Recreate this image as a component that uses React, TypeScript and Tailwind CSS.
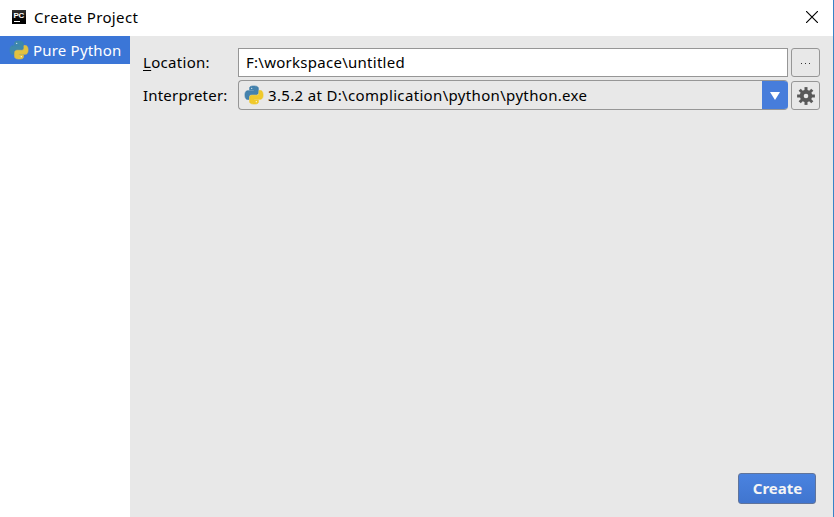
const HALF =
  "M14.25.18l.9.2.73.26.59.3.45.32.34.34.25.34.16.33.1.3.04.26.02.2-.01.13V8.5l-.05.63-.13.55-.21.46-.26.38-.3.31-.33.25-.35.19-.35.14-.33.1-.3.07-.26.04-.21.02H8.77l-.69.05-.59.14-.5.22-.41.27-.33.32-.27.35-.2.36-.15.37-.1.35-.07.32-.04.27-.02.21v3.06H3.17l-.21-.03-.28-.07-.32-.12-.35-.18-.36-.26-.36-.36-.35-.46-.32-.59-.28-.73-.21-.88-.14-1.05-.05-1.23.06-1.22.16-1.04.24-.87.32-.71.36-.57.4-.44.42-.33.42-.24.4-.16.36-.1.32-.05.24-.01h.16l.06.01h8.16v-.83H6.18l-.01-2.75-.02-.37.05-.34.11-.31.17-.28.25-.26.31-.23.38-.2.44-.18.51-.15.58-.12.64-.1.71-.06.77-.04.84-.02 1.27.05z";

interface PythonIconProps {
  blue: string;
  yellow: string;
}

function PythonIcon({ blue, yellow }: PythonIconProps) {
  return (
    <svg viewBox="0 0 24 24" className="h-[18px] w-[18px] shrink-0 overflow-visible">
      <path d={HALF} fill={blue} stroke={blue} strokeWidth="0.9" />
      <circle cx="8.9" cy="3.1" r="0.9" fill="#dbe8f1" />
      <g transform="rotate(180 12 12)">
        <path d={HALF} fill={yellow} stroke={yellow} strokeWidth="0.9" />
        <circle cx="8.9" cy="3.1" r="0.9" fill="#fff8d5" />
      </g>
    </svg>
  );
}

function PyCharmIcon() {
  return (
    <span className="relative -mt-[2px] block h-[14px] w-[14px] shrink-0 bg-gradient-to-b from-[#353535] to-black">
      <span className="absolute top-[2px] left-[1.5px] font-['Liberation_Sans',sans-serif] text-[8px] leading-[8px] font-bold tracking-[-0.3px] text-white">
        PC
      </span>
      <span className="absolute bottom-[2px] left-[2px] h-px w-[6px] bg-white" />
    </span>
  );
}

function GearIcon() {
  return (
    <svg viewBox="-9 -9 18 18" className="h-[18px] w-[18px]">
      <g fill="#595959">
        {[0, 45, 90, 135].map((a) => (
          <rect key={a} x="-1.5" y="-8.9" width="3" height="17.8" transform={`rotate(${a})`} />
        ))}
        <circle r="6.2" />
      </g>
      <circle r="2.3" fill="#e8e8e8" />
    </svg>
  );
}

export default function App() {
  return (
    <div className="flex h-[517px] w-[834px] flex-col overflow-hidden border-r border-[#3784c7] bg-white font-['Noto_Sans',sans-serif] text-[15px] leading-5 text-black">
      <header className="flex h-9 shrink-0 items-center pr-[15px] pl-3">
        <PyCharmIcon />
        <h1 className="ml-2 flex-1 pb-[2px] tracking-[0.38px] whitespace-nowrap">Create Project</h1>
        <svg viewBox="0 0 12 12" className="-mt-[2px] h-3 w-3" stroke="black" strokeWidth="1.15">
          <path d="M0 0L12 12M12 0L0 12" />
        </svg>
      </header>
      <div className="flex flex-1">
        <aside className="w-[130px] shrink-0">
          <div className="flex h-7 items-center bg-[#3b76d7] pl-[10px] text-white">
            <PythonIcon blue="#3f89ab" yellow="#e2c23f" />
            <span className="ml-[5px] tracking-[0.2px] whitespace-nowrap">Pure Python</span>
          </div>
        </aside>
        <main className="flex flex-1 flex-col bg-[#e8e8e8] pt-3 pr-[13px] pl-[13px]">
          <div className="flex h-[29px] items-center">
            <label className="w-[95px] shrink-0 pb-[2px] tracking-[0.3px] whitespace-nowrap">
              <span className="underline underline-offset-2">L</span>ocation:
            </label>
            <div className="flex h-full w-[550px] items-center border border-[#969696] bg-white pl-[7px]">
              <span className="pb-[2px] tracking-[0.27px] whitespace-nowrap">F:\workspace\untitled</span>
            </div>
            <button className="ml-[3px] flex h-full w-[29px] items-center justify-center gap-[3px] rounded-[3px] border border-[#969696] pt-[2px]">
              <i className="h-px w-px bg-[#333]" />
              <i className="h-px w-px bg-[#333]" />
              <i className="h-px w-px bg-[#333]" />
            </button>
          </div>
          <div className="mt-[3px] flex h-[30px] items-center">
            <label className="w-[95px] shrink-0 tracking-[0.2px] whitespace-nowrap">Interpreter:</label>
            <div className="flex h-full w-[550px] items-center overflow-hidden rounded-[4px] border border-r-0 border-[#969696] pl-[6px]">
              <PythonIcon blue="#4482ad" yellow="#f0c92b" />
              <span className="ml-[5px] flex-1 tracking-[0.34px] whitespace-nowrap">3.5.2 at D:\complication\python\python.exe</span>
              <span className="-my-px flex h-[30px] w-[26px] items-center justify-center bg-[#477ddb]">
                <svg viewBox="0 0 10 8" className="mt-[2px] h-2 w-[10px]">
                  <path d="M0 0H10L5 8Z" fill="white" />
                </svg>
              </span>
            </div>
            <button className="ml-[3px] flex h-[29px] w-[29px] items-center justify-center self-end rounded-[3px] border border-[#969696]">
              <GearIcon />
            </button>
          </div>
          <button className="mt-auto mr-[4px] mb-[13px] h-[31px] w-[78px] self-end rounded-[3px] border border-[#60749b] bg-gradient-to-b from-[#4a83e0] to-[#4075cf] pb-[2px] pl-[1px] font-bold text-[#f4f4f4]">
            Create
          </button>
        </main>
      </div>
    </div>
  );
}
